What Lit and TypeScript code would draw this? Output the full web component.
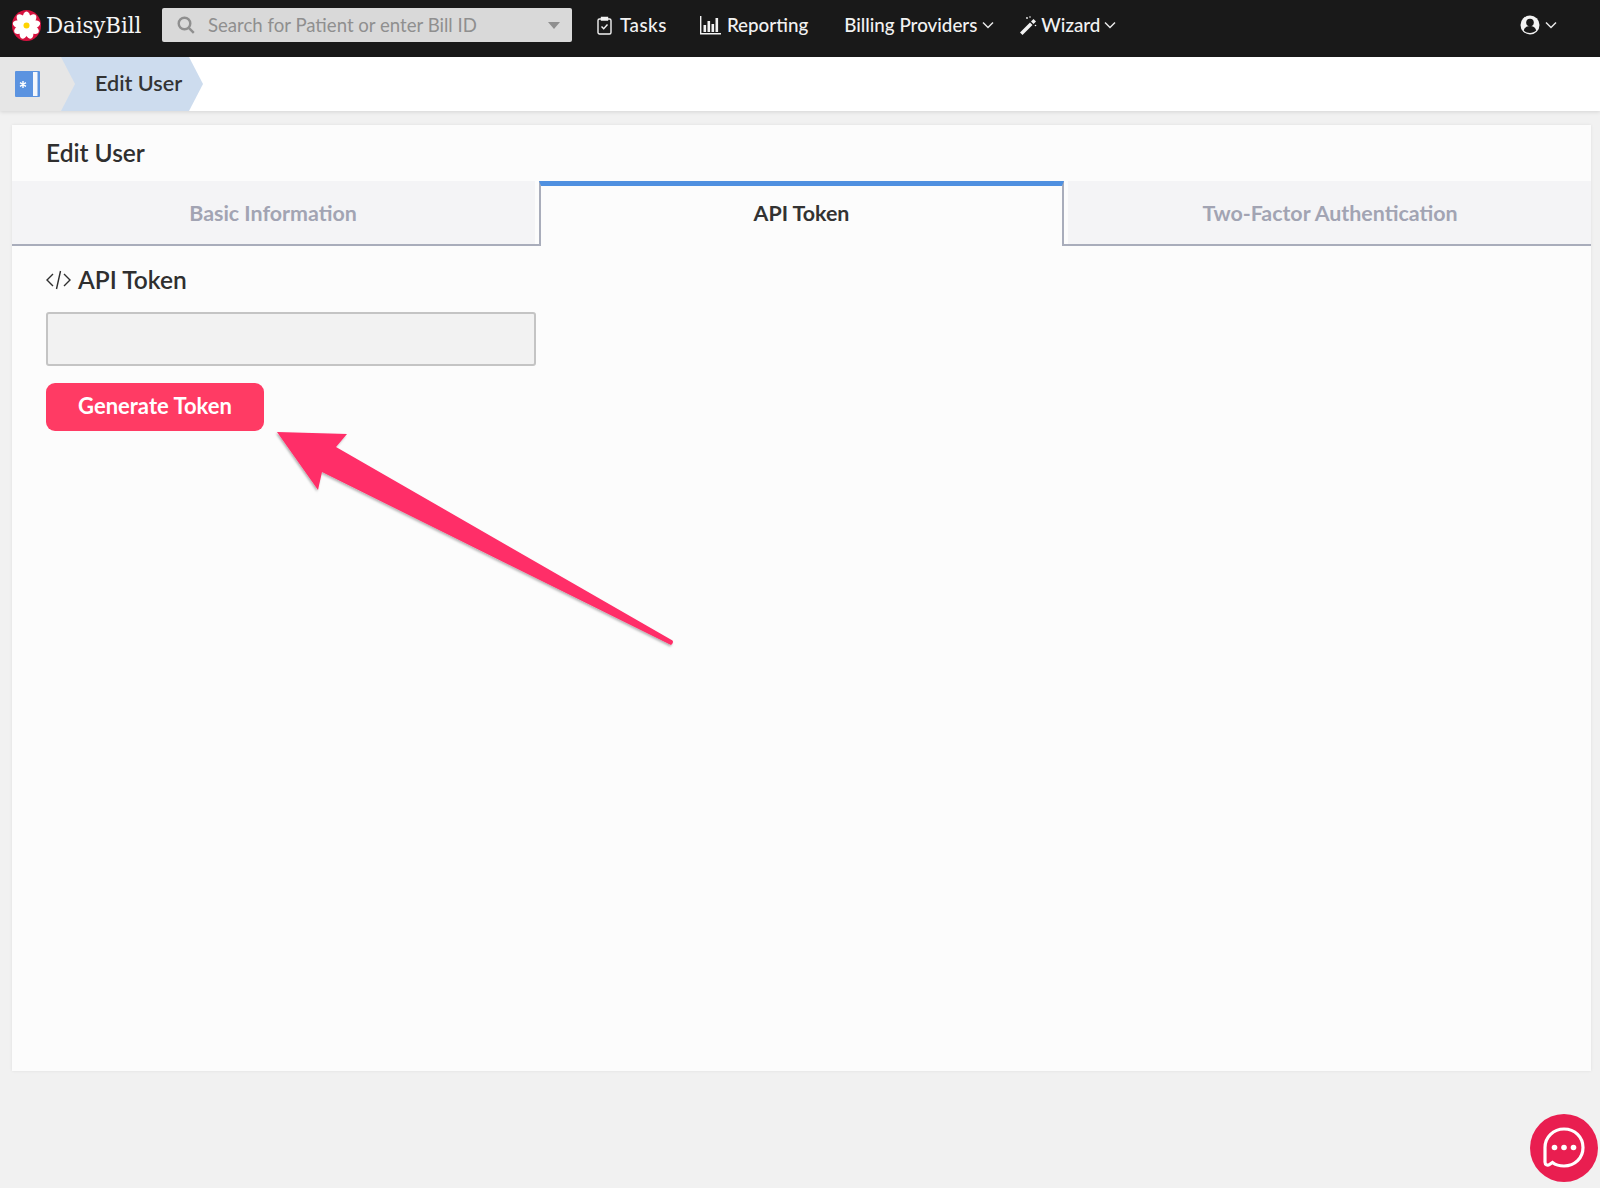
import { LitElement, html, css, svg } from "lit";
import { customElement } from "lit/decorators.js";

const petals = [0, 40, 80, 120, 160, 200, 240, 280, 320];

@customElement("app-root")
export class AppRoot extends LitElement {
  static styles = css`
    :host {
      display: block;
      position: relative;
      height: 1188px;
      overflow: hidden;
      background: #f1f1f1;
      font-family: "Lato", "Open Sans", sans-serif;
      color: #333;
    }
    * { box-sizing: border-box; }
    svg { display: block; flex: none; }
    .top {
      height: 57px;
      background: #191919;
      display: flex;
      align-items: center;
      color: #f2f2f2;
      font-size: 18.8px;
      font-weight: 500;
      padding: 0 0 7px 12px;
    }
    .top .nav span { position: relative; top: -1px; }
    .logo { width: 29px; height: 31px; margin-right: 5px; }
    .brand {
      font-family: "DejaVu Serif", serif;
      font-size: 21.4px;
      letter-spacing: -0.1px;
      width: 116px;
      color: #f5f5f5;
    }
    .search {
      width: 410px;
      height: 34px;
      background: #d9d9d9;
      border-radius: 2px;
      display: flex;
      align-items: center;
      padding-left: 15px;
      padding-right: 12px;
      color: #8f8f8f;
      font-size: 18.6px;
      font-weight: 400;
      margin-right: 25px;
    }
    .search span { margin-left: 13px; flex: 1; }
    .caret {
      width: 0; height: 0;
      border-left: 6.5px solid transparent;
      border-right: 6.5px solid transparent;
      border-top: 7px solid #8f8f8f;
    }
    .nav { display: flex; align-items: center; }
    .nav-tasks { margin-right: 33px; gap: 8px; letter-spacing: 0.5px; }
    .nav-rep { margin-right: 36px; gap: 6px; }
    .nav-bill { margin-right: 25px; gap: 5px; }
    .nav-wiz { gap: 4px; }
    .nav-wiz .chev { margin-left: 0; }
    .user { margin-left: auto; margin-right: 43px; display: flex; align-items: center; gap: 5px; }

    .crumbs {
      height: 54px;
      background: #fff;
      display: flex;
      box-shadow: 0 1px 4px rgba(0, 0, 0, 0.12);
      position: relative;
    }
    .crumb-home {
      width: 75px;
      background: #e6e6e6;
      clip-path: polygon(0 0, 61px 0, 75px 50%, 61px 100%, 0 100%);
      display: flex;
      align-items: center;
      padding-left: 15px;
      position: relative;
      z-index: 1;
    }
    .crumb-cur {
      margin-left: -14px;
      width: 146px;
      padding: 0 0 2px 34px;
      background: #cddcee;
      clip-path: polygon(0 0, 128px 0, 142px 50%, 128px 100%, 0 100%);
      display: flex;
      align-items: center;
      font-size: 21.6px;
      font-weight: 600;
      color: #333;
    }

    .card {
      margin: 14px 9px 0 12px;
      height: 946px;
      background: #fcfcfc;
      box-shadow: 0 0 3px rgba(0, 0, 0, 0.08);
    }
    .title {
      height: 56px;
      padding: 0 0 2px 34px;
      display: flex;
      align-items: center;
      font-size: 24.5px;
      font-weight: 600;
      color: #2f2f2f;
    }
    .tabs { display: flex; height: 65px; }
    .tab {
      display: flex;
      align-items: center;
      justify-content: center;
      font-size: 21.4px;
      font-weight: 700;
    }
    .tab.off {
      color: #a2a4b3;
      background: #f4f4f6;
      border-bottom: 2px solid #a9adbb;
    }
    .tab.left { width: 527px; padding-right: 5px; box-shadow: inset -4px 0 0 #fcfcfc; }
    .tab.right { flex: 1; padding-left: 5px; box-shadow: inset 4px 0 0 #fcfcfc; }
    .tab.on {
      width: 525px;
      color: #333;
      border-top: 5px solid #4f90e0;
      border-left: 2px solid #a9adbb;
      border-right: 2px solid #a9adbb;
      padding-bottom: 7px;
    }
    .body { padding: 20px 34px 0; }
    .head {
      display: flex;
      align-items: center;
      gap: 7px;
      height: 28px;
      font-size: 24.5px;
      font-weight: 600;
      color: #2f2f2f;
    }
    .head span { position: relative; top: -1px; }
    .field {
      margin-top: 18px;
      width: 490px;
      height: 54px;
      background: #f2f2f2;
      border: 2px solid #c4c4c4;
      border-radius: 3px;
    }
    .btn {
      display: flex;
      align-items: center;
      justify-content: center;
      margin-top: 17px;
      width: 218px;
      height: 48px;
      padding-bottom: 3px;
      background: #ff3b64;
      border-radius: 9px;
      color: #fff;
      font-size: 22px;
      font-weight: 700;
    }
    .arrow { position: absolute; left: 0; top: 0; pointer-events: none; }
    .chat {
      position: absolute;
      left: 1530px;
      top: 1114px;
      width: 68px;
      height: 68px;
      border-radius: 50%;
      background: #e91e50;
      display: flex;
      align-items: center;
      justify-content: center;
    }
  `;

  private chev() {
    return html`<svg class="chev" width="12" height="8" viewBox="0 0 12 8" fill="none" stroke="#e8e8e8" stroke-width="1.5"><path d="M1 1.5l5 5 5-5"/></svg>`;
  }

  render() {
    return html`
      <header class="top">
        <svg class="logo" viewBox="0 0 29 31">
          <ellipse cx="14.5" cy="15.5" rx="14.5" ry="15.5" fill="#d6123f"/>
          ${petals.map((a) => svg`<ellipse cx="14.5" cy="8" rx="3.9" ry="6.4" fill="#fff" transform="rotate(${a} 14.5 15.5)"/>`)}
          <circle cx="14.5" cy="15.5" r="3" fill="#ffd400"/>
        </svg>
        <div class="brand">DaisyBill</div>
        <div class="search">
          <svg width="18" height="18" viewBox="0 0 18 18" fill="none" stroke="#8f8f8f" stroke-width="2.4"><circle cx="7.5" cy="7.5" r="5.8"/><path d="M11.8 11.8l5 5"/></svg>
          <span>Search for Patient or enter Bill ID</span>
          <i class="caret"></i>
        </div>
        <div class="nav nav-tasks">
          <svg width="15" height="19" viewBox="0 0 15 19" fill="none" stroke="#f2f2f2" stroke-width="1.4"><rect x="1" y="3" width="13" height="15" rx="1.5"/><path d="M4.5 1.500h6v2.500h-6z" fill="#f2f2f2"/><path d="M4.5 10.5l2.2 2.3 3.8-4.3"/></svg>
          <span>Tasks</span>
        </div>
        <div class="nav nav-rep">
          <svg width="21" height="19" viewBox="0 0 21 19" fill="#f2f2f2"><path d="M0 0h1.4v17h19.6v1.5H0z"/><rect x="3.5" y="9" width="2.6" height="7"/><rect x="7.5" y="5" width="2.6" height="11"/><rect x="11.5" y="8" width="2.6" height="8"/><rect x="15.5" y="2" width="2.6" height="14"/></svg>
          <span>Reporting</span>
        </div>
        <div class="nav nav-bill"><span>Billing Providers</span>${this.chev()}</div>
        <div class="nav nav-wiz">
          <svg width="18" height="19" viewBox="0 0 18 19" fill="#f2f2f2"><path d="M1 16.500L11 6.500l2.500 2.500L3.500 19z"/><path d="M12 5.500l2.500-2.500 2.500 2.500-2.500 2.500z"/><circle cx="8" cy="2" r=".9"/><circle cx="11" cy="1" r=".8"/><circle cx="16.500" cy="9.500" r=".8"/></svg>
          <span>Wizard</span>${this.chev()}
        </div>
        <div class="user">
          <svg width="20" height="20" viewBox="0 0 20 20"><circle cx="10" cy="10" r="9.500" fill="#f2f2f2"/><circle cx="10" cy="7.500" r="3.800" fill="#191919"/><path d="M3.800 15.500c1-3.500 3.500-4.500 6.200-4.500s5.200 1 6.200 4.500c-3 3.300-9.400 3.300-12.400 0z" fill="#191919"/></svg>
          ${this.chev()}
        </div>
      </header>

      <nav class="crumbs">
        <div class="crumb-home">
          <svg width="25" height="26" viewBox="0 0 25 26">
            <rect width="25" height="26" rx="1" fill="#5b93e0"/>
            <rect x="18" y="1" width="4.500" height="24" fill="#f4f7fc"/>
            <path d="M8 10v7M5 11.700l6 3.600M11 11.700l-6 3.600" stroke="#fff" stroke-width="1.400"/>
          </svg>
        </div>
        <div class="crumb-cur">Edit User</div>
      </nav>

      <main class="card">
        <div class="title">Edit User</div>
        <div class="tabs">
          <div class="tab off left">Basic Information</div>
          <div class="tab on">API Token</div>
          <div class="tab off right">Two-Factor Authentication</div>
        </div>
        <section class="body">
          <div class="head">
            <svg width="25" height="20" viewBox="0 0 25 20" fill="none" stroke="#2f2f2f" stroke-width="1.400"><path d="M7 4l-6 6 6 6M18 4l6 6-6 6M14.500 1l-4 18"/></svg>
            <span>API Token</span>
          </div>
          <div class="field"></div>
          <div class="btn">Generate Token</div>
        </section>
      </main>

      <svg class="arrow" width="700" height="660" viewBox="0 0 700 660">
        <defs><filter id="s" x="-5%" y="-5%" width="110%" height="110%"><feDropShadow dx="-1" dy="1.500" stdDeviation="1" flood-color="#000" flood-opacity=".3"/></filter></defs>
        <path d="M277 432L347 434L336 447L672.500 640.500Q674 643 671 645L322 472L318 490Z" fill="#ff2d68" filter="url(#s)"/>
      </svg>

      <div class="chat">
        <svg width="44" height="44" viewBox="0 0 44 44" fill="none">
          <path d="M22 3C11.500 3 3 11 3 21.500V36c0 3 2.500 4 4.500 2.500L10.500 36.500c3 2.300 7 3.500 11.500 3.500 11 0 19-8 19-18.500S33 3 22 3z" stroke="#fff" stroke-width="3.200"/>
          <circle cx="12.500" cy="21.500" r="2.800" fill="#fff"/><circle cx="22" cy="21.500" r="2.800" fill="#fff"/><circle cx="31.500" cy="21.500" r="2.800" fill="#fff"/>
        </svg>
      </div>
    `;
  }
}
